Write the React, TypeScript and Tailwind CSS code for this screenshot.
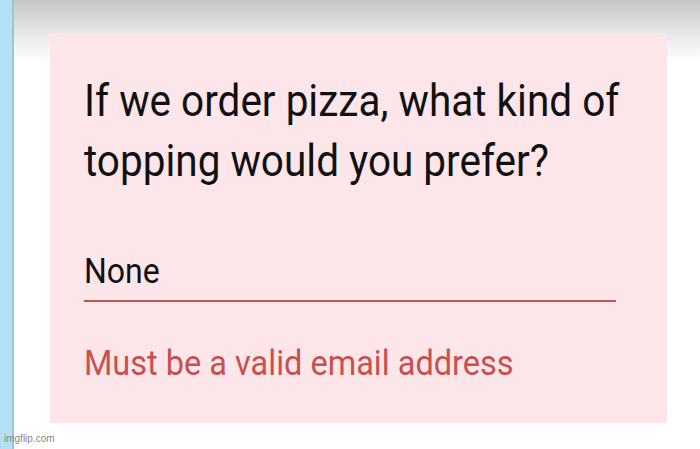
export default function App() {
  return (
    <div className="relative w-[700px] h-[449px] overflow-hidden bg-white flex" style={{ fontFamily: "Roboto, 'Noto Sans', sans-serif" }}>
      <div className="w-[14px] h-full bg-[#b3e0f3] border-r-2 border-[#9cc6d8] shrink-0" />
      <div className="flex-1 flex flex-col bg-gradient-to-b from-[#c6c6c6] via-[#eaeaea] via-[8%] to-white to-[14%]">
        <div className="mt-[33px] ml-[36px] w-[617px] h-[390px] bg-[#fde6ea] flex flex-col pl-[34px] pr-[51px] pt-[39px]">
          <p className="text-[40.5px] leading-[60px] text-[#111] whitespace-nowrap">
            <span className="block scale-y-[1.08] origin-[50%_73%]">If we order pizza, what kind of</span>
            <span className="block scale-y-[1.08] origin-[50%_73%]">topping would you prefer?</span>
          </p>
          <div className="mt-[60px] text-[32px] leading-[40px] text-[#111] border-b-2 border-[#b85a55] pb-[8px]">
            <span className="block scale-y-[1.08] origin-[50%_77%]">None</span>
          </div>
          <p className="mt-[42px] text-[32.5px] leading-[40px] text-[#c8504f]">
            <span className="block scale-y-[1.08] origin-[50%_78%]">Must be a valid email address</span>
          </p>
        </div>
      </div>
      <div className="absolute left-[4px] bottom-[3px] text-[10px] text-[#888]" style={{ fontFamily: "'Liberation Sans', sans-serif" }}>imgflip.com</div>
    </div>
  );
}
